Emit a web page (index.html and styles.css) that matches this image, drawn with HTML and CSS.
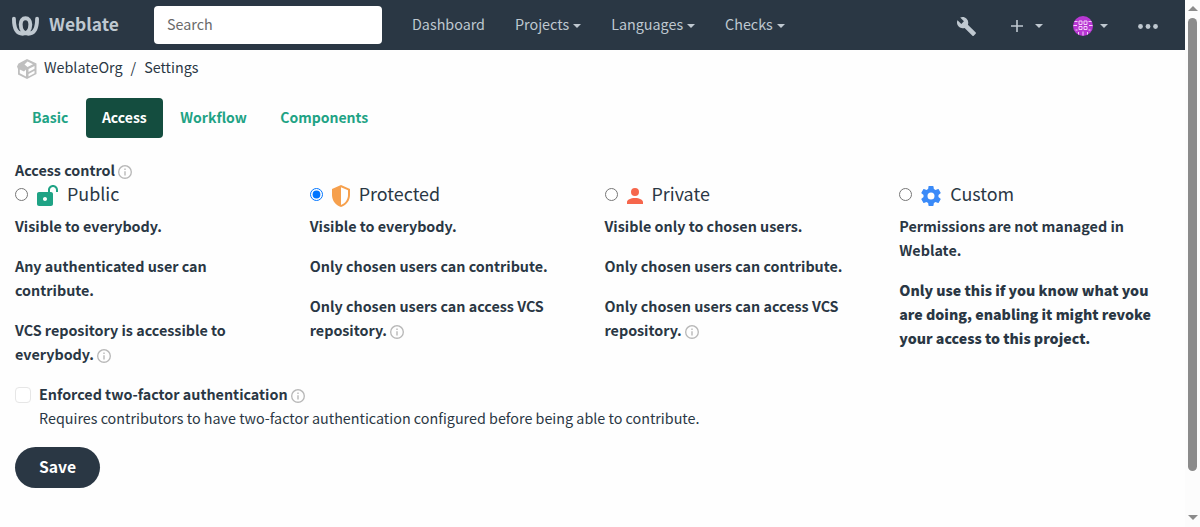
FILE: index.html
```html
<!doctype html>
<html lang="en">
<head>
    <meta charset="UTF-8">
    <title>WeblateOrg settings</title>
    <meta name="viewport" content="width=device-width, initial-scale=1">
    <link rel="stylesheet" href="styles.css">
</head>
<body>

<svg class="sprite" aria-hidden="true">
    <symbol id="info" viewBox="2 2 20 20"><path d="M11 9h2V7h-2m1 13c-4.410 0-8-3.590-8-8s3.590-8 8-8 8 3.590 8 8-3.590 8-8 8m0-18A10 10 0 0 0 2 12a10 10 0 0 0 10 10 10 10 0 0 0 10-10A10 10 0 0 0 12 2m-1 15h2v-6h-2v6z"/></symbol>
</svg>

<div class="page">

    <nav class="navbar">
        <a class="brand" href="#">
            <svg class="logo" viewBox="0 0 28 20">
                <path d="M2 2.500C2 12 5 18 11 18C16 18 19 14 19 8.500C19 4.500 17 2 14 2C11 2 9 4.500 9 8.500C9 14 12 18 17 18C23 18 26 12 26 2.500"/>
            </svg>
            <span>Weblate</span>
        </a>
        <input class="search" type="text" placeholder="Search">
        <ul class="menu">
            <li><a href="#">Dashboard</a></li>
            <li><a class="caret" href="#">Projects</a></li>
            <li><a class="caret" href="#">Languages</a></li>
            <li><a class="caret" href="#">Checks</a></li>
        </ul>
        <div class="tools">
            <svg class="wrench" viewBox="1 1 22 22"><path d="M22.700 19l-9.100-9.100c.9-2.300.4-5-1.500-6.900-2-2-5-2.400-7.400-1.300L9 6 6 9 1.600 4.700C.4 7.100.9 10.100 2.900 12.100c1.900 1.900 4.600 2.400 6.900 1.500l9.100 9.100c.4.4 1 .4 1.400 0l2.300-2.300c.5-.4.5-1.100.1-1.400z"/></svg>
            <a class="caret add" href="#"><svg viewBox="0 0 12 12"><path d="M5.200 0h1.600v5.200H12v1.600H6.800V12H5.200V6.800H0V5.200h5.200z"/></svg></a>
            <a class="caret user" href="#"><svg viewBox="0 0 20 20">
                <circle class="face" cx="10" cy="10" r="10"/>
                <path class="pixels" d="M6 5h3v3.500h-3zM11 5h3v3.500h-3zM6 10.500h3v3h-3zM11 10.500h3v3h-3zM1.500 5.500h3M15.500 5.500h3M0.500 9.500h3.500M16 9.500h3.500M2.500 14h2M15.500 14h2M5.500 16v2.500M14.500 16v2.500M10 15.500v4"/>
            </svg></a>
            <svg class="dots" viewBox="0 0 20 5"><circle cx="2.500" cy="2.500" r="2.400"/><circle cx="10" cy="2.500" r="2.400"/><circle cx="17.500" cy="2.500" r="2.400"/></svg>
        </div>
    </nav>

    <ol class="breadcrumb">
        <li><svg class="box" viewBox="0 0 20 20"><path d="M10 0L19.500 4.500V15L10 20L1 15.500V10L0 7.500L1.500 4.500zM10.500 2.500L7.500 5.500L10.500 8L16 5.200zM2.800 10.500V14.300L9 17.600V10.500L7 12.500zM11.500 10V13L17.500 9.800V7zM11.500 15V17.500L17.500 14.200V11.800z"/></svg><a href="#">WeblateOrg</a></li>
        <li><a href="#">Settings</a></li>
    </ol>

    <ul class="tabs">
        <li><a href="#">Basic</a></li>
        <li><a class="active" href="#">Access</a></li>
        <li><a href="#">Workflow</a></li>
        <li><a href="#">Components</a></li>
    </ul>

    <form>
        <label class="legend">Access control <svg class="info"><use href="#info"/></svg></label>

        <div class="choices">
            <label class="choice">
                <span class="title">
                    <input type="radio" name="access">
                    <svg class="public" viewBox="2 1 21 21"><path d="M18 1C15.240 1 13 3.240 13 6V8H4C2.900 8 2 8.890 2 10V20C2 21.110 2.900 22 4 22H16C17.110 22 18 21.110 18 20V10C18 8.900 17.110 8 16 8H15V6C15 4.340 16.340 3 18 3S21 4.340 21 6V8H23V6C23 3.240 20.760 1 18 1M10 13C11.100 13 12 13.890 12 15C12 16.110 11.110 17 10 17S8 16.110 8 15C8 13.900 8.900 13 10 13Z"/></svg>
                    <span>Public</span>
                </span>
                <p>Visible to everybody.</p>
                <p>Any authenticated user can contribute.</p>
                <p>VCS repository is accessible to everybody. <svg class="info"><use href="#info"/></svg></p>
            </label>
            <label class="choice">
                <span class="title">
                    <input type="radio" name="access" checked>
                    <svg class="protected" viewBox="3 1 18 22"><path fill-rule="evenodd" d="M12 1L3 5V11C3 16.550 6.840 21.740 12 23C17.160 21.740 21 16.550 21 11V5L12 1M12 3.180L19 6.300V11C19 15.520 16 19.690 12 20.930Z"/></svg>
                    <span>Protected</span>
                </span>
                <p>Visible to everybody.</p>
                <p>Only chosen users can contribute.</p>
                <p>Only chosen users can access VCS repository. <svg class="info"><use href="#info"/></svg></p>
            </label>
            <label class="choice">
                <span class="title">
                    <input type="radio" name="access">
                    <svg class="private" viewBox="4 4 16 16"><path d="M12 4a4 4 0 0 1 4 4 4 4 0 0 1-4 4 4 4 0 0 1-4-4 4 4 0 0 1 4-4m0 10c4.420 0 8 1.790 8 4v2H4v-2c0-2.210 3.580-4 8-4"/></svg>
                    <span>Private</span>
                </span>
                <p>Visible only to chosen users.</p>
                <p>Only chosen users can contribute.</p>
                <p>Only chosen users can access VCS repository. <svg class="info"><use href="#info"/></svg></p>
            </label>
            <label class="choice">
                <span class="title">
                    <input type="radio" name="access">
                    <svg class="custom" viewBox="2 2 20 20"><path d="M12 15.500A3.500 3.500 0 0 1 8.500 12 3.500 3.500 0 0 1 12 8.500a3.500 3.500 0 0 1 3.500 3.500 3.500 3.500 0 0 1-3.500 3.500m7.430-2.530c.04-.32.07-.64.07-.97 0-.33-.03-.66-.07-1l2.110-1.630c.19-.15.24-.42.12-.64l-2-3.460c-.12-.22-.39-.31-.61-.22l-2.490 1c-.52-.39-1.060-.73-1.690-.98l-.37-2.650A.506.506 0 0 0 14 2h-4c-.25 0-.46.18-.5.42l-.37 2.650c-.63.25-1.170.59-1.690.98l-2.490-1c-.22-.09-.49 0-.61.22l-2 3.460c-.13.22-.07.49.12.64L4.570 11c-.04.34-.07.67-.07 1 0 .33.03.65.07.97l-2.110 1.660c-.19.15-.25.42-.12.64l2 3.460c.12.22.39.3.61.22l2.490-1.010c.52.4 1.060.74 1.690.99l.37 2.650c.04.24.25.42.5.42h4c.25 0 .46-.18.5-.42l.37-2.650c.63-.26 1.170-.59 1.690-.99l2.490 1.010c.22.08.49 0 .61-.22l2-3.460c.12-.22.07-.49-.12-.64l-2.110-1.660Z"/></svg>
                    <span>Custom</span>
                </span>
                <p>Permissions are not managed in Weblate.</p>
                <p class="warn">Only use this if you know what you are doing, enabling it might revoke your access to this project.</p>
            </label>
        </div>

        <div class="check">
            <input type="checkbox" id="twofactor">
            <div>
                <label for="twofactor">Enforced two-factor authentication <svg class="info"><use href="#info"/></svg></label>
                <div class="help">Requires contributors to have two-factor authentication configured before being able to contribute.</div>
            </div>
        </div>

        <button class="save" type="button">Save</button>
    </form>

</div>

<div class="scrollbar">
    <span class="up"></span>
    <span class="thumb"></span>
    <span class="down"></span>
</div>

</body>
</html>
```

FILE: styles.css
```css
* {
    box-sizing: border-box;
}

body {
    margin: 0;
    display: flex;
    height: 527px;
    overflow: hidden;
    font-family: "Noto Sans CJK SC", "Noto Sans", sans-serif;
    font-size: 14.33px;
    line-height: 24px;
    color: #2a3744;
    background: #fefefe;
}

a {
    color: inherit;
    text-decoration: none;
}

ul, ol {
    list-style: none;
    margin: 0;
    padding: 0;
    display: flex;
}

p {
    margin: 0 0 16px;
}

.sprite {
    display: none;
}

.page {
    width: 1185px;
}

/* top bar */

.navbar {
    display: flex;
    align-items: center;
    height: 50px;
    padding-left: 12px;
    background: #2a3744;
    color: #bfc8d0;
}

.brand {
    display: flex;
    align-items: center;
    width: 142px;
    font-size: 17.4px;
    font-weight: bold;
}

.brand span {
    padding-bottom: 3px;
}

.logo {
    width: 27px;
    height: 20px;
    margin: 2px 10px 0 0;
    fill: none;
    stroke: #bfc8d0;
    stroke-width: 4;
    stroke-linecap: round;
}

.search {
    width: 228px;
    height: 38px;
    padding: 0 13px 3px;
    border: 0;
    border-radius: 4px;
    background: #fff;
    font: inherit;
}

.search::placeholder {
    color: #6a6a6a;
}

.menu {
    margin-left: 30px;
    padding-bottom: 2px;
    gap: 30px;
}

.caret::after {
    content: "";
    display: inline-block;
    margin-left: 4px;
    vertical-align: 2px;
    border: 4px solid transparent;
    border-top-color: #bfc8d0;
    border-bottom: 0;
}

.tools {
    display: flex;
    align-items: center;
    margin-left: auto;
    padding: 2px 27px 0 0;
    fill: #bfc8d0;
}

.tools .caret {
    display: flex;
    align-items: center;
}

.wrench {
    width: 19px;
    height: 19px;
    margin-right: 35px;
}

.add {
    margin-right: 30px;
}

.add svg {
    width: 12px;
    height: 12px;
    margin-right: 8px;
}

.user {
    margin-right: 30px;
}

.user svg {
    width: 20px;
    height: 20px;
    margin-right: 3px;
}

.face {
    fill: #b837d3;
}

.pixels {
    fill: none;
    stroke: #f3d3f8;
    stroke-width: 1;
}

.dots {
    width: 20px;
    height: 5px;
}

/* breadcrumb */

.breadcrumb {
    padding: 5px 15px 0 17px;
}

.breadcrumb li {
    display: flex;
    height: 25px;
}

.breadcrumb li + li::before {
    content: "/";
    padding: 0 8px;
}

.box {
    width: 20px;
    height: 20px;
    margin: 4px 7px 0 0;
    fill: #bfbfbf;
    fill-rule: evenodd;
}

/* tabs */

.tabs {
    margin: 18px 16px 20px;
    gap: 1.5px;
    font-size: 14px;
    font-weight: bold;
    color: #1fa385;
}

.tabs a {
    display: block;
    padding: 7px 16px 9px;
    border-radius: 4px;
}

.tabs .active {
    color: #fff;
    background: #144d3f;
}

/* form */

form {
    padding: 0 15px;
}

label {
    font-weight: bold;
}

.legend {
    display: block;
}

.info {
    width: 14px;
    height: 14px;
    vertical-align: -3px;
    fill: #b8b8b8;
}

.choices {
    display: grid;
    grid-template-columns: repeat(4, 264.75px);
    column-gap: 30px;
}

.choice .title {
    display: flex;
    align-items: center;
    height: 24px;
    margin-bottom: 8px;
    font-size: 17.9px;
    font-weight: normal;
}

.title span {
    padding-bottom: 3px;
}

.title input {
    width: 13px;
    height: 13px;
    margin: 0 9px 0 0;
}

.title svg {
    margin: 3px 9px 0 0;
}

.public {
    width: 21px;
    height: 21px;
    fill: #1fa385;
}

.protected {
    width: 18px;
    height: 22px;
    fill: #f6a04d;
}

.private {
    width: 16px;
    height: 16px;
    fill: #f6664c;
}

.custom {
    width: 20px;
    height: 20px;
    fill: #3a8af8;
}

.warn {
    font-size: 14.2px;
    font-weight: 900;
}

.check {
    display: flex;
}

.check input {
    appearance: none;
    width: 16px;
    height: 16px;
    margin: 5px 8px 0 0;
    border: 1px solid #e6e6e6;
    border-radius: 4px;
    background: #fff;
}

.save {
    display: block;
    height: 41px;
    margin-top: 17px;
    padding: 0 24px 2px;
    border: 0;
    border-radius: 21px;
    font: bold 15.7px "Noto Sans CJK SC", "Noto Sans", sans-serif;
    color: #fff;
    background: #2a3744;
}

/* scrollbar */

.scrollbar {
    display: flex;
    flex-direction: column;
    align-items: center;
    width: 15px;
    padding: 6px 0 7px;
    background: #fcfcfc;
}

.scrollbar .up,
.scrollbar .down {
    border: 5px solid transparent;
}

.scrollbar .up {
    border-top: 0;
    border-bottom-color: #8b8b8b;
}

.scrollbar .thumb {
    width: 9px;
    height: 453px;
    margin-top: 7px;
    border-radius: 5px;
    background: #8b8b8b;
}

.scrollbar .down {
    margin-top: auto;
    border-bottom: 0;
    border-top-color: #8b8b8b;
}
```
